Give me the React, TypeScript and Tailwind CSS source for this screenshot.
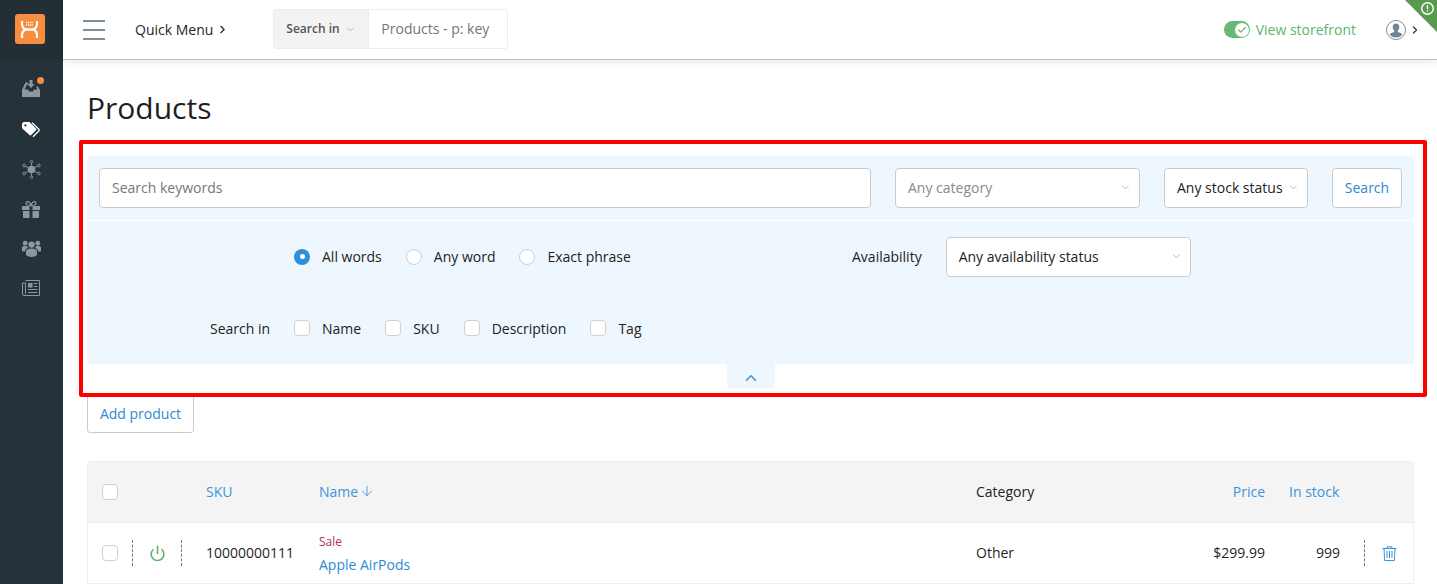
import { ChevronDown, ChevronRight, ChevronUp, ArrowDown, Power, Check } from "lucide-react";

const InboxIcon = () => (
  <svg width="18" height="17" viewBox="0 0 18 17" fill="currentColor">
    <path d="M3.5 2.5H6v2H5L2.6 9.5H6l1 2h4l1-2h3.4L14 6.5h2L18 10v7H0v-7z" />
    <path d="M7.5 0h3v4h2.3L9 8 5.2 4h2.3z" />
  </svg>
);

const TagIcon = () => (
  <svg width="18" height="16" viewBox="0 0 18 16">
    <path d="M0 1.5 1.5 0h6L14 6.5a1.2 1.2 0 0 1 0 1.7L9.2 13a1.2 1.2 0 0 1-1.7 0L.6 6.8A2 2 0 0 1 0 5.4z" fill="#fff" />
    <circle cx="3.4" cy="3.4" r="1.1" fill="#26323a" />
    <path d="M10 .6 16.8 7.3a1.2 1.2 0 0 1 0 1.7L11 14.8" fill="none" stroke="#fff" strokeWidth="1.3" />
  </svg>
);

const HubIcon = () => (
  <svg width="19" height="19" viewBox="0 0 20 20" fill="none" stroke="currentColor" strokeWidth="1">
    <circle cx="10" cy="10" r="4" fill="currentColor" stroke="none" />
    <path d="M10 6V3M10 14v3M6.5 8L3.5 6.5M13.5 8l3-1.5M6.5 12l-3 1.5M13.5 12l3 1.5" />
    <circle cx="10" cy="1.8" r="1.3" />
    <circle cx="10" cy="18.2" r="1.3" />
    <circle cx="2.2" cy="5.8" r="1.4" />
    <circle cx="17.8" cy="5.8" r="1.4" />
    <circle cx="2.2" cy="14.2" r="1.4" />
    <circle cx="17.8" cy="14.2" r="1.4" />
  </svg>
);

const GiftIcon = () => (
  <svg width="18" height="17" viewBox="0 0 18 17" fill="currentColor">
    <path d="M0 5h7.5v4H0zM10.5 5H18v4h-7.5zM1 10h6.5v7H2a1 1 0 0 1-1-1zM10.5 10H17v6a1 1 0 0 1-1 1h-5.5z" />
    <path d="M9 4.5 5.5 4C3.5 3.6 3.5.6 5.5.6 7.2.6 8.4 2.6 9 4.5c.6-1.9 1.8-3.9 3.5-3.9 2 0 2 3 0 3.4z" fill="none" stroke="currentColor" strokeWidth="1.2" />
  </svg>
);

const UsersIcon = () => (
  <svg width="19" height="17" viewBox="0 0 19 17" fill="currentColor">
    <circle cx="9.5" cy="4.6" r="3.2" />
    <circle cx="3.2" cy="3.2" r="2.4" />
    <circle cx="15.8" cy="3.2" r="2.4" />
    <path d="M4 11.5C4 9.5 6 8.4 9.5 8.4S15 9.5 15 11.5V15c-1.2 1.3-3 2-5.5 2S5.200 16.300 4 15z" />
    <path d="M0 8c0-1.500 1-2.300 3.200-2.300.9 0 1.500.2 2 .5A4.500 4.500 0 0 0 6 8.100C4.200 8.700 3 9.800 3 11.500H1c-.6 0-1-.4-1-1zM19 8c0-1.500-1-2.300-3.200-2.300-.9 0-1.500.2-2 .5a4.500 4.500 0 0 1-.8 1.900c1.800.6 3 1.700 3 3.400h2c.6 0 1-.4 1-1z" />
  </svg>
);

const NewsIcon = () => (
  <svg width="18" height="16" viewBox="0 0 18 16" fill="none" stroke="currentColor" strokeWidth="1">
    <path d="M3.500.5h14v15H2A1.500 1.500 0 0 1 .5 14V3h3v11" />
    <path d="M6 3h4.500v4.500H6z" fill="currentColor" stroke="none" />
    <path d="M11.800 3.500H15.500M11.800 6.500H15.500M6 9.500H15.500M6 12.500H15.500" strokeWidth="1.200" />
  </svg>
);

const TrashIcon = () => (
  <svg width="15" height="15" viewBox="0 0 15 15" fill="none" stroke="#3b94d9" strokeWidth="1">
    <path d="M0.500 2.500h14M5 2.500V.8h5v1.700M2 2.500l.6 12h9.800l.6-12" />
    <path d="M5 5v7M7.500 5v7M10 5v7" />
  </svg>
);

const Logo = () => (
  <div className="flex h-[30px] w-[30px] items-center justify-center rounded-[3px] bg-[#f68d3f]">
    <svg width="19" height="19" viewBox="0 0 19 19" fill="none" stroke="#fff">
      <path d="M2 1v2.500C2 7 3.500 8.500 5.500 9.500 3.500 10.500 2 12 2 15.500V18M17 1v2.500C17 7 15.500 8.500 13.500 9.500 15.500 10.500 17 12 17 15.500V18" strokeWidth="2.200" />
      <path d="M5 9.500h9" strokeWidth="2.400" />
      <path d="M6 2.500h7M6 5h7" strokeWidth="1.300" strokeDasharray="1.200 .9" />
    </svg>
  </div>
);

const Sidebar = () => (
  <aside className="flex w-[63px] shrink-0 flex-col items-center bg-[#26323a] pr-[1px] text-[#8b98a1]">
    <div className="flex h-[59px] w-[63px] justify-start bg-[#232e35] pt-[14px] pl-[15px]">
      <Logo />
    </div>
    <div className="relative mt-[19px] flex h-5 items-center">
      <InboxIcon />
      <span className="absolute -top-[1px] -right-[4px] h-[7px] w-[7px] rounded-full bg-[#f68d3f]" />
    </div>
    <div className="mt-[24px]"><TagIcon /></div>
    <div className="mt-[22px]"><HubIcon /></div>
    <div className="mt-[22px]"><GiftIcon /></div>
    <div className="mt-[22px]"><UsersIcon /></div>
    <div className="mt-[23px]"><NewsIcon /></div>
  </aside>
);

const Header = () => (
  <header className="relative flex h-[60px] shrink-0 items-center border-b border-[#bdbdbd] shadow-[0_3px_8px_rgba(0,0,0,0.08)]">
    <div className="ml-[20px] flex w-[22px] flex-col gap-[7px]">
      <span className="h-[2px] bg-[#7c8e9b]" />
      <span className="h-[2px] bg-[#7c8e9b]" />
      <span className="h-[2px] bg-[#7c8e9b]" />
    </div>
    <div className="ml-[30px] flex items-center pb-[1px] text-[14px] text-[#1f1f1f]">
      Quick Menu
      <ChevronRight size={13} className="ml-[3px]" />
    </div>
    <div className="ml-[44px] -mt-[1px] flex h-[40px] w-[235px] rounded-[3px] border border-[#ececec] text-[14px]">
      <div className="flex w-[95px] items-center border-r border-[#ececec] bg-[#f3f3f3] pl-[12px] text-[12px] font-semibold text-[#555]">
        Search in
        <ChevronDown size={11} className="ml-[5px] text-[#a9a9b5]" />
      </div>
      <div className="flex items-center pb-[1px] pl-[12px] text-[#757575]">Products - p: key</div>
    </div>
    <div className="ml-auto flex items-center">
      <div className="flex h-[17px] w-[26px] items-center justify-end rounded-full bg-[#67b974] pr-[1px]">
        <span className="flex h-[14px] w-[14px] items-center justify-center rounded-full bg-white">
          <Check size={10} strokeWidth={3} className="text-[#67b974]" />
        </span>
      </div>
      <span className="ml-[6px] pb-[1px] text-[14px] text-[#5eb56c]">View storefront</span>
      <svg className="ml-[30px]" width="20" height="20" viewBox="0 0 20 20">
        <circle cx="10" cy="10" r="9.500" fill="#fff" stroke="#7c8e9b" />
        <path d="M10 3.500c2.200 0 3.300 1.700 3.300 3.700 0 1.500-.6 2.700-1.500 3.500v1.300c1.800.6 4 1.400 4.700 2.700a9 9 0 0 1-13 0c.7-1.300 2.900-2.100 4.700-2.700v-1.300c-.9-.8-1.500-2-1.500-3.500 0-2 1.100-3.700 3.300-3.700z" fill="#6f8494" />
      </svg>
      <ChevronRight size={12} strokeWidth={2.5} className="mr-[16px] ml-[3px] text-[#333]" />
    </div>
    <svg className="absolute top-0 right-0" width="32" height="32" viewBox="0 0 32 32">
      <path d="M0 0H32V32z" fill="#5a9a50" />
      <circle cx="22.500" cy="8.500" r="5.800" fill="none" stroke="#fff" strokeWidth="1.400" />
      <path d="M22.500 5.300v3.900M22.500 10.400v1.400" stroke="#fff" strokeWidth="1.400" />
    </svg>
  </header>
);

const Select = ({ label, muted, className }: { label: string; muted?: boolean; className: string }) => (
  <div className={`flex h-[40px] items-center justify-between rounded-[4px] border border-[#cbcbcb] bg-white pr-[8px] pl-[12px] text-[14px] ${muted ? "text-[#8a8a8a]" : "text-[#222]"} ${className}`}>
    {label}
    <ChevronDown size={11} className="text-[#a9a9b5]" />
  </div>
);

const Option = ({ label, type }: { label: string; type: "on" | "off" | "box" }) => (
  <label className="flex items-center gap-[12px] text-[14px] text-[#222]">
    {type === "on" && (
      <span className="flex h-[16px] w-[16px] items-center justify-center rounded-full bg-[#2f8fd8]">
        <span className="h-[5px] w-[5px] rounded-full bg-white" />
      </span>
    )}
    {type === "off" && <span className="h-[16px] w-[16px] rounded-full border border-[#cfcfcf] bg-white" />}
    {type === "box" && <span className="h-[16px] w-[16px] rounded-[4px] border border-[#cfcfcf] bg-white" />}
    {label}
  </label>
);

const Filters = () => (
  <div className="relative mt-[27px]">
    <div className="rounded-t-[4px] bg-[#eff7fe]">
      <div className="flex h-[65px] items-center border-b border-white pr-[12px] pb-[1px] pl-[12px]">
        <div className="flex h-[40px] w-[772px] items-center rounded-[4px] border border-[#cbcbcb] bg-white pl-[12px] text-[14px] text-[#777]">
          Search keywords
        </div>
        <Select label="Any category" muted className="ml-[24px] w-[245px]" />
        <Select label="Any stock status" className="ml-[24px] w-[144px]" />
        <div className="ml-[24px] flex h-[40px] w-[70px] items-center justify-center rounded-[4px] border border-[#cbcbcb] bg-white text-[14px] text-[#2b8ad2]">
          Search
        </div>
      </div>
      <div className="flex h-[71px] items-center">
        <div className="ml-[207px] flex w-[558px] items-center gap-[24px]">
          <Option label="All words" type="on" />
          <Option label="Any word" type="off" />
          <Option label="Exact phrase" type="off" />
        </div>
        <span className="text-[14px] text-[#222]">Availability</span>
        <Select label="Any availability status" className="ml-[24px] w-[245px]" />
      </div>
      <div className="flex h-[72px] items-center">
        <span className="ml-[123px] w-[84px] text-[14px] text-[#222]">Search in</span>
        <div className="flex items-center gap-[24px]">
          <Option label="Name" type="box" />
          <Option label="SKU" type="box" />
          <Option label="Description" type="box" />
          <Option label="Tag" type="box" />
        </div>
      </div>
    </div>
    <div className="mx-auto flex h-[24px] w-[48px] items-center justify-center rounded-b-[4px] bg-[#eff7fe] pt-[3px]">
      <ChevronUp size={18} strokeWidth={2} className="text-[#3b94d9]" />
    </div>
    <div className="pointer-events-none absolute -top-[16px] -right-[13px] -left-[8px] h-[257px] rounded-[2px] border-[4px] border-[#ff0000]" />
  </div>
);

const Table = () => (
  <div className="mt-[28px] rounded-t-[4px] border border-[#eeeeee] text-[14px]">
    <div className="flex h-[60px] items-center bg-[#f4f4f4] text-[#3b94d9]">
      <span className="ml-[14px] h-[16px] w-[16px] rounded-[4px] border border-[#cfcfcf] bg-white" />
      <span className="ml-[88px] w-[113px] pb-[2px]">SKU</span>
      <span className="flex w-[657px] items-center pb-[2px]">
        Name
        <ArrowDown size={16} strokeWidth={1.25} className="ml-[1px]" />
      </span>
      <span className="w-[200px] pb-[2px] text-[#222]">Category</span>
      <span className="w-[89px] pb-[2px] text-right">Price</span>
      <span className="ml-[24px] pb-[2px]">In stock</span>
    </div>
    <div className="flex h-[61px] items-center border-t border-[#eeeeee] pb-[1px] text-[#1f1f1f]">
      <span className="ml-[14px] h-[16px] w-[16px] rounded-[4px] border border-[#cfcfcf] bg-white" />
      <span className="ml-[14px] h-[26px] border-l border-dashed border-[#777]" />
      <Power size={17} strokeWidth={2.25} className="mt-[2px] ml-[16px] text-[#5eb56c]" />
      <span className="ml-[15px] h-[26px] border-l border-dashed border-[#777]" />
      <span className="ml-[24px] w-[113px]">10000000111</span>
      <div className="flex w-[657px] flex-col pt-[7px]">
        <span className="text-[12px] leading-[18px] text-[#b03060]">Sale</span>
        <span className="leading-[28px] text-[#2b8ad2]">Apple AirPods</span>
      </div>
      <span className="w-[200px]">Other</span>
      <span className="w-[89px] text-right">$299.99</span>
      <span className="w-[75px] text-right">999</span>
      <span className="ml-[24px] h-[26px] border-l border-dashed border-[#777]" />
      <span className="mt-[2px] ml-[17px]"><TrashIcon /></span>
    </div>
  </div>
);

export default function App() {
  return (
    <div className="flex h-[584px] w-[1437px] overflow-hidden bg-white font-['Open_Sans',sans-serif]">
      <Sidebar />
      <div className="flex min-w-0 flex-1 flex-col">
        <Header />
        <main className="pr-[23px] pl-[24px]">
          <h1 className="mt-[27px] text-[30px] leading-[42px] text-[#1f1f1f]">Products</h1>
          <Filters />
          <div className="mt-[6px] flex h-[39px] w-[107px] items-center justify-center rounded-[3px] border border-[#cbcbcb] pb-[1px] text-[14px] text-[#2b8ad2]">
            Add product
          </div>
          <Table />
        </main>
      </div>
    </div>
  );
}
